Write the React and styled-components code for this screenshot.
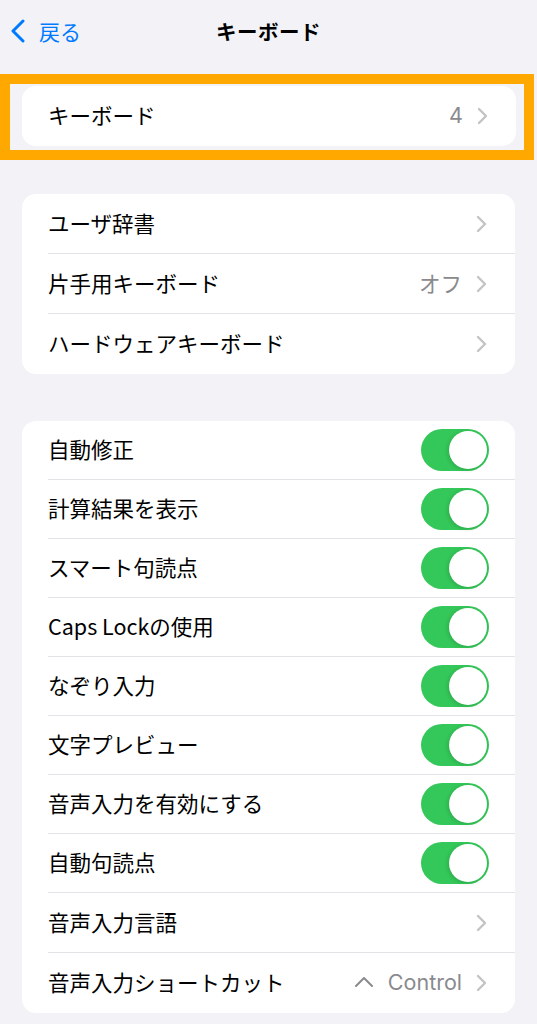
import React from "react";
import styled, { createGlobalStyle } from "styled-components";

const Global = createGlobalStyle`
  html, body { margin: 0; padding: 0; background: #f2f2f7; }
  body { font-family: "Noto Sans CJK JP", "Noto Sans", sans-serif; -webkit-font-smoothing: antialiased; }
`;

const Page = styled.div`
  width: 537px;
  min-height: 1024px;
  background: #f2f2f7;
  display: flex;
  flex-direction: column;
`;

const NavBar = styled.div`
  height: 64px;
  display: grid;
  grid-template-columns: 1fr auto 1fr;
  align-items: center;
`;

const Back = styled.div`
  display: flex;
  align-items: center;
  gap: 14px;
  padding-left: 11px;
  color: #007aff;
  font-size: 21px;
  line-height: 1;
  padding-bottom: 2px;
`;

const Title = styled.div`
  font-size: 20.5px;
  font-weight: 700;
  color: #000;
  letter-spacing: 0.5px;
  padding-bottom: 2px;
`;

const Highlight = styled.div`
  margin-top: 10px;
  width: 534px;
  box-sizing: border-box;
  border: 10px solid #ffa800;
  padding: 2px 8px 4px 12px;
`;

const Card = styled.div`
  background: #fff;
  border-radius: 14px;
  overflow: hidden;
  margin: ${(p) => p.$margin || "0 22px"};
`;

const Row = styled.div`
  padding-left: 26px;
  height: ${(p) => p.$h}px;
  display: flex;
`;

const RowInner = styled.div`
  flex: 1;
  display: flex;
  align-items: center;
  padding-right: ${(p) => (p.$toggle ? 26 : 28)}px;
  border-bottom: ${(p) => (p.$last ? "none" : "1px solid #e3e3e7")};
`;

const Label = styled.div`
  flex: 1;
  font-size: 21.5px;
  color: #000;
  white-space: nowrap;
  padding-bottom: 3px;
`;

const Value = styled.div`
  font-size: 21.5px;
  color: #8a8a8e;
  margin-right: 14px;
  display: flex;
  align-items: center;
  gap: 14px;
  padding-bottom: 2px;
  font-family: "Inter", "Noto Sans CJK JP", sans-serif;
`;

const ValueJa = styled(Value)`
  font-family: "Noto Sans CJK JP", sans-serif;
`;

const Track = styled.div`
  width: 68px;
  height: 42px;
  border-radius: 21px;
  background: #34c759;
  display: flex;
  align-items: center;
  justify-content: flex-end;
  padding: 0 2px;
  box-sizing: border-box;
`;

const Knob = styled.div`
  width: 38px;
  height: 38px;
  border-radius: 50%;
  background: #fff;
  box-shadow: -1px 1px 4px rgba(0, 0, 0, 0.15);
`;

const Gap = styled.div`
  height: ${(p) => p.$h}px;
`;

const Chevron = () => (
  <svg width="11" height="18" viewBox="0 0 11 18">
    <polyline points="2,2 9,9 2,16" fill="none" stroke="#c4c4c7" strokeWidth="2.4" strokeLinecap="round" strokeLinejoin="round" />
  </svg>
);

const Caret = () => (
  <svg width="20" height="12" viewBox="0 0 20 12">
    <polyline points="2,10 10,2 18,10" fill="none" stroke="#8a8a8e" strokeWidth="2" strokeLinecap="round" strokeLinejoin="round" />
  </svg>
);

const Toggle = () => (
  <Track>
    <Knob />
  </Track>
);

const group2 = [
  { label: "ユーザ辞書" },
  { label: "片手用キーボード", value: "オフ", ja: true },
  { label: "ハードウェアキーボード" },
];

const group3 = [
  { label: "自動修正", toggle: true },
  { label: "計算結果を表示", toggle: true },
  { label: "スマート句読点", toggle: true },
  { label: "Caps Lockの使用", toggle: true },
  { label: "なぞり入力", toggle: true },
  { label: "文字プレビュー", toggle: true },
  { label: "音声入力を有効にする", toggle: true },
  { label: "自動句読点", toggle: true },
  { label: "音声入力言語" },
  { label: "音声入力ショートカット", value: "Control", caret: true },
];

const ListRow = ({ item, last }) => (
  <Row $h={item.toggle ? 59 : 60}>
    <RowInner $last={last} $toggle={item.toggle}>
      <Label>{item.label}</Label>
      {item.value && !item.ja && (
        <Value>
          {item.caret && <Caret />}
          {item.value}
        </Value>
      )}
      {item.value && item.ja && <ValueJa>{item.value}</ValueJa>}
      {item.toggle ? <Toggle /> : <Chevron />}
    </RowInner>
  </Row>
);

export default function App() {
  return (
    <Page>
      <Global />
      <NavBar>
        <Back>
          <svg width="14" height="24" viewBox="0 0 14 24">
            <polyline points="12,2 2,12 12,22" fill="none" stroke="#007aff" strokeWidth="3" strokeLinecap="round" strokeLinejoin="round" />
          </svg>
          <span>戻る</span>
        </Back>
        <Title>キーボード</Title>
        <div />
      </NavBar>
      <Highlight>
        <Card $margin="0">
          <ListRow item={{ label: "キーボード", value: "4" }} last />
        </Card>
      </Highlight>
      <Gap $h={34} />
      <Card>
        {group2.map((it, i) => (
          <ListRow key={it.label} item={it} last={i === group2.length - 1} />
        ))}
      </Card>
      <Gap $h={47} />
      <Card>
        {group3.map((it, i) => (
          <ListRow key={it.label} item={it} last={i === group3.length - 1} />
        ))}
      </Card>
    </Page>
  );
}
